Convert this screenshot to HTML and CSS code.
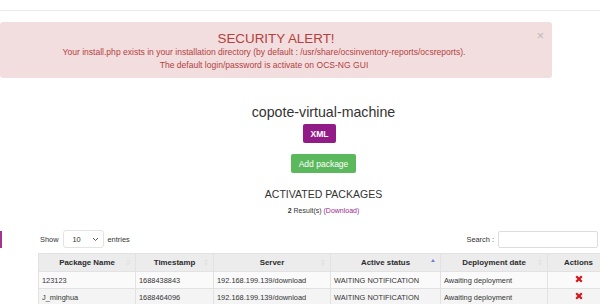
FILE: index.html
```html
<!DOCTYPE html>
<html lang="en">
<head>
    <meta charset="UTF-8">
    <title>OCS Inventory - copote-virtual-machine</title>
    <link rel="stylesheet" href="styles.css">
</head>
<body>
    <div class="top-nav"></div>
    <div class="side-tab"></div>
    <div class="sec-alert">
        <span class="sec-alert-close">&times;</span>
        <div class="sec-alert-title">SECURITY ALERT!</div>
        <div class="sec-alert-line">Your install.php exists in your installation directory (by default : /usr/share/ocsinventory-reports/ocsreports).</div>
        <div class="sec-alert-line">The default login/password is activate on OCS-NG GUI</div>
    </div>
    <main class="pkg-main">
        <h2 class="pkg-machine">copote-virtual-machine</h2>
        <div class="pkg-center"><button class="btn btn-xml">XML</button></div>
        <div class="pkg-center"><button class="btn btn-add">Add package</button></div>
        <h3 class="pkg-title">ACTIVATED PACKAGES</h3>
        <div class="pkg-count"><b>2</b> Result(s) <a href="#">(Download)</a></div>
        <div class="dt-controls">
            <div class="dt-length">Show
                <span class="dt-select">10
                    <svg width="7" height="5" viewBox="0 0 7 5"><path d="M1 1l2.5 2.5L6 1" fill="none" stroke="#555" stroke-width="1"/></svg>
                </span>
                entries</div>
            <div class="dt-search">Search : <span class="dt-input"></span></div>
        </div>
        <table class="dt-table">
            <colgroup>
                <col class="col-name">
                <col class="col-time">
                <col class="col-server">
                <col class="col-status">
                <col class="col-date">
                <col class="col-actions">
            </colgroup>
            <thead>
                <tr>
                    <th>Package Name<i class="sort"></i></th>
                    <th>Timestamp<i class="sort"></i></th>
                    <th>Server<i class="sort"></i></th>
                    <th>Active status<i class="sort sort-asc"></i></th>
                    <th>Deployment date<i class="sort"></i></th>
                    <th class="dt-actions">Actions</th>
                </tr>
            </thead>
            <tbody>
                <tr>
                    <td>123123</td>
                    <td>1688438843</td>
                    <td>192.168.199.139/download</td>
                    <td>WAITING NOTIFICATION</td>
                    <td>Awaiting deployment</td>
                    <td class="dt-actions"><svg width="8" height="8" viewBox="0 0 8 8"><path d="M1.2 1.2l5.6 5.6M6.8 1.2L1.2 6.8" stroke="#d9151b" stroke-width="2.2"/></svg></td>
                </tr>
                <tr>
                    <td>J_minghua</td>
                    <td>1688464096</td>
                    <td>192.168.199.139/download</td>
                    <td>WAITING NOTIFICATION</td>
                    <td>Awaiting deployment</td>
                    <td class="dt-actions"><svg width="8" height="8" viewBox="0 0 8 8"><path d="M1.2 1.2l5.6 5.6M6.8 1.2L1.2 6.8" stroke="#d9151b" stroke-width="2.2"/></svg></td>
                </tr>
            </tbody>
        </table>
    </main>
</body>
</html>
```

FILE: styles.css
```css
body {
    font-family: 'Liberation Sans', Arial, sans-serif;
    color: #333;
    background: #fff;
    margin: 0;
    padding: 0;
    overflow: hidden;
}
.top-nav {
    height: 10px;
    border-bottom: 1px solid #eceaea;
}
.side-tab {
    position: fixed;
    left: 0;
    top: 231px;
    width: 2px;
    height: 17px;
    background: #a3358f;
}
.sec-alert {
    position: relative;
    width: 552px;
    height: 56px;
    box-sizing: border-box;
    margin-top: 11px;
    padding-top: 9px;
    background: #f2dede;
    border-radius: 3px;
    color: #b5413f;
    text-align: center;
}
.sec-alert-close {
    position: absolute;
    right: 8px;
    top: 6px;
    font-size: 13px;
    color: #bbb;
}
.sec-alert-title {
    font-size: 13.4px;
    line-height: 15px;
}
.sec-alert-line {
    font-size: 8.55px;
    line-height: 13px;
    padding-right: 24px;
}
.pkg-main {
    margin-left: 38px;
    width: 571px;
}
.pkg-machine {
    font-size: 14.2px;
    font-weight: normal;
    line-height: 20px;
    text-align: center;
    margin: 24px 0 0;
}
.pkg-center {
    text-align: center;
}
.btn {
    font-family: inherit;
    border: none;
    border-radius: 2px;
    color: #fff;
    height: 19px;
    padding: 0 8px;
    font-size: 8.5px;
    cursor: pointer;
}
.btn-xml {
    background: #921c87;
    font-weight: bold;
    margin-top: 2px;
    margin-left: -8px;
}
.btn-add {
    background: #5cb85c;
    margin-top: 11px;
}
.pkg-title {
    font-size: 10.5px;
    font-weight: normal;
    line-height: 16px;
    text-align: center;
    margin: 13px 0 0;
}
.pkg-count {
    font-size: 7px;
    line-height: 12px;
    text-align: center;
    margin-top: 3px;
}
.pkg-count a {
    color: #9b2a8e;
    text-decoration: none;
}
.dt-controls {
    display: flex;
    justify-content: space-between;
    align-items: center;
    margin-top: 13px;
    padding-left: 2px;
    font-size: 7.4px;
}
.dt-length, .dt-search {
    display: flex;
    align-items: center;
    gap: 4px;
}
.dt-select {
    display: flex;
    align-items: center;
    justify-content: space-between;
    width: 41px;
    height: 18px;
    box-sizing: border-box;
    padding: 0 4px 0 9px;
    border: 1px solid #e3e3e3;
    border-radius: 3px;
}
.dt-input {
    width: 100px;
    height: 17px;
    box-sizing: border-box;
    border: 1px solid #ddd;
    border-radius: 2px;
    margin-right: 11px;
}
.dt-table {
    width: 571px;
    table-layout: fixed;
    border-collapse: collapse;
    margin-top: 5px;
    font-size: 7.4px;
}
.col-name { width: 97px; }
.col-time { width: 78px; }
.col-server { width: 117px; }
.col-status { width: 110px; }
.col-date { width: 107px; }
.col-actions { width: 62px; }
.dt-table th, .dt-table td {
    border: 1px solid #e2e2e2;
    text-align: left;
    height: 16px;
    padding: 0 3px;
    white-space: nowrap;
}
.dt-table th {
    position: relative;
    background: #ececec;
    color: #2b2b2b;
    font-size: 7.9px;
    text-align: center;
    height: 17px;
}
.dt-table tbody tr:nth-child(odd) {
    background: #fafafa;
}
.dt-table tbody tr:nth-child(even) {
    background: #f4f4f4;
}
.dt-table .dt-actions {
    text-align: center;
}
.sort {
    position: absolute;
    right: 5px;
    top: 5px;
    width: 0;
    height: 0;
    border-left: 2px solid transparent;
    border-right: 2px solid transparent;
    border-bottom: 3px solid #e2e2e2;
}
.sort::after {
    content: "";
    position: absolute;
    left: -2px;
    top: 4px;
    border-left: 2px solid transparent;
    border-right: 2px solid transparent;
    border-top: 3px solid #e2e2e2;
}
.sort-asc {
    border-bottom-color: #6b7ed6;
}
.sort-asc::after {
    display: none;
}
```
